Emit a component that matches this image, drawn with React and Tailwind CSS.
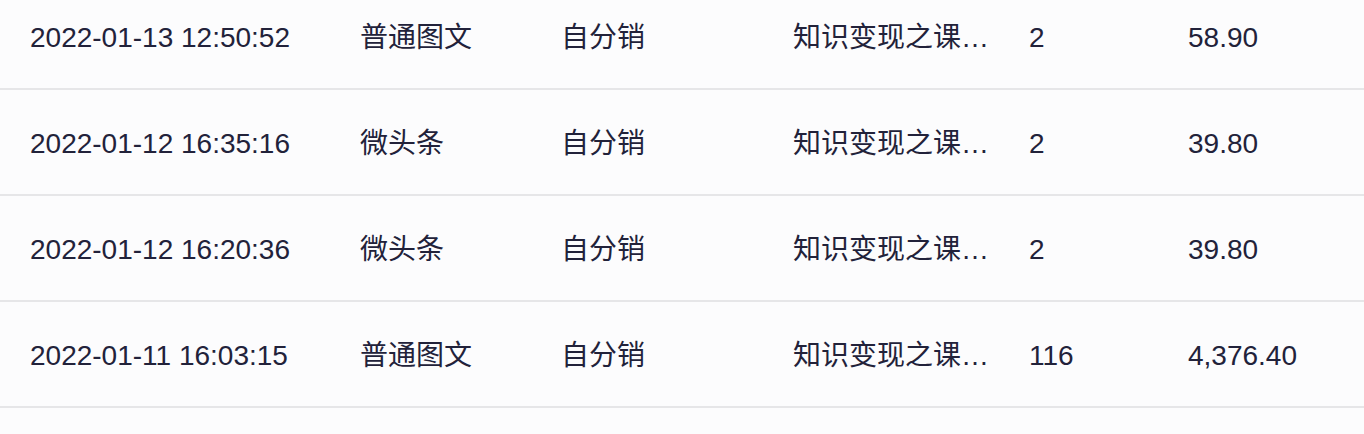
import React from "react";

const rows = [
  ["2022-01-13 12:50:52", "普通图文", "自分销", "知识变现之课…", "2", "58.90"],
  ["2022-01-12 16:35:16", "微头条", "自分销", "知识变现之课…", "2", "39.80"],
  ["2022-01-12 16:20:36", "微头条", "自分销", "知识变现之课…", "2", "39.80"],
  ["2022-01-11 16:03:15", "普通图文", "自分销", "知识变现之课…", "116", "4,376.40"],
];

export default function App() {
  return (
    <div
      className="w-[1364px] h-[434px] overflow-hidden bg-[#fcfcfd] text-[#22223a] text-[28px]"
      style={{ fontFamily: '"Liberation Sans", "Noto Sans CJK SC", sans-serif' }}
    >
      <div className="-mt-[16px] flex flex-col">
        {rows.map((r, i) => (
          <div
            key={i}
            className="grid grid-cols-[330px_201px_232px_236px_159px_1fr] items-center h-[106px] pl-[30px] pt-[3px] border-b-2 border-[#e6e6e8] leading-none whitespace-nowrap"
          >
            <div>{r[0]}</div>
            <div>{r[1]}</div>
            <div>{r[2]}</div>
            <div>{r[3]}</div>
            <div>{r[4]}</div>
            <div>{r[5]}</div>
          </div>
        ))}
        <div className="h-[40px]" />
      </div>
    </div>
  );
}
